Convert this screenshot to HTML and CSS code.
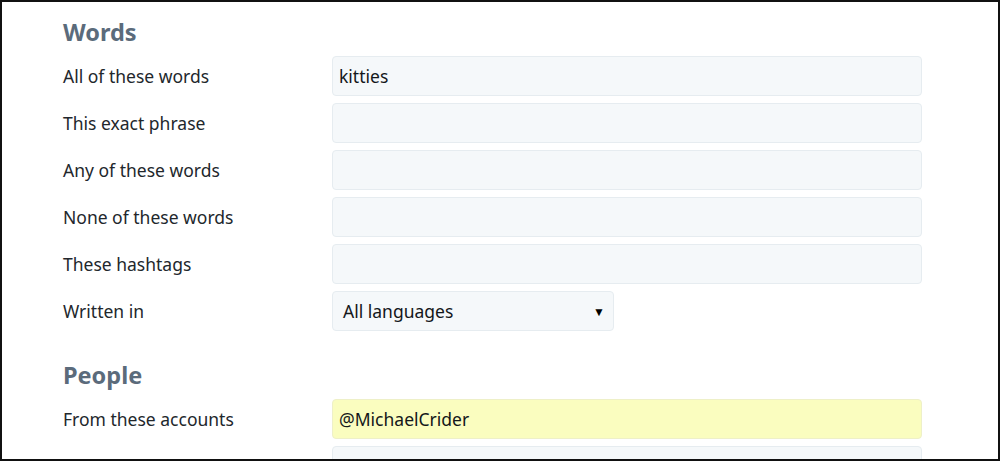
FILE: index.html
```html
<!DOCTYPE html>
<html>
<head>
<meta charset="utf-8">
<link rel="stylesheet" href="styles.css">
</head>
<body>
<div class="frame">
  <div class="form">
    <h2 class="section-title">Words</h2>
    <div class="row"><label class="label">All of these words</label><div class="field">kitties</div></div>
    <div class="row"><label class="label">This exact phrase</label><div class="field"></div></div>
    <div class="row"><label class="label">Any of these words</label><div class="field"></div></div>
    <div class="row"><label class="label">None of these words</label><div class="field"></div></div>
    <div class="row"><label class="label">These hashtags</label><div class="field"></div></div>
    <div class="row"><label class="label">Written in</label><div class="field select"><span>All languages</span><span class="caret">▼</span></div></div>
    <h2 class="section-title people">People</h2>
    <div class="row"><label class="label">From these accounts</label><div class="field autofill">@MichaelCrider</div></div>
    <div class="row"><label class="label"></label><div class="field"></div></div>
  </div>
</div>
</body>
</html>
```
FILE: styles.css
```css
html, body {
  margin: 0;
  padding: 0;
  background: #fff;
}
.frame {
  width: 1000px;
  height: 461px;
  box-sizing: border-box;
  border: 2px solid #111;
  overflow: hidden;
  font-family: "Noto Sans", "Open Sans", sans-serif;
}
.form {
  padding: 15px 0 0 61px;
  display: flex;
  flex-direction: column;
  gap: 7px;
}
.section-title {
  margin: 0;
  font-size: 23.5px;
  font-weight: 700;
  color: #5b6b7b;
  line-height: 30px;
  height: 32px;
}
.section-title.people {
  margin-top: 22px;
}
.row {
  display: flex;
  align-items: center;
  height: 40px;
}
.label {
  width: 269px;
  font-size: 17.5px;
  color: #22272c;
}
.field {
  box-sizing: border-box;
  width: 590px;
  height: 40px;
  border: 1px solid #e6ecf0;
  border-radius: 4px;
  background: #f5f8fa;
  padding: 0 6px;
  font-size: 17.5px;
  color: #14171a;
  display: flex;
  align-items: center;
}
.field.select {
  width: 282px;
  padding: 0 8px 0 10px;
  justify-content: space-between;
}
.caret {
  font-size: 12px;
  color: #000;
}
.field.autofill {
  background: #fafdbf;
  border-color: #eef0c8;
}
```
